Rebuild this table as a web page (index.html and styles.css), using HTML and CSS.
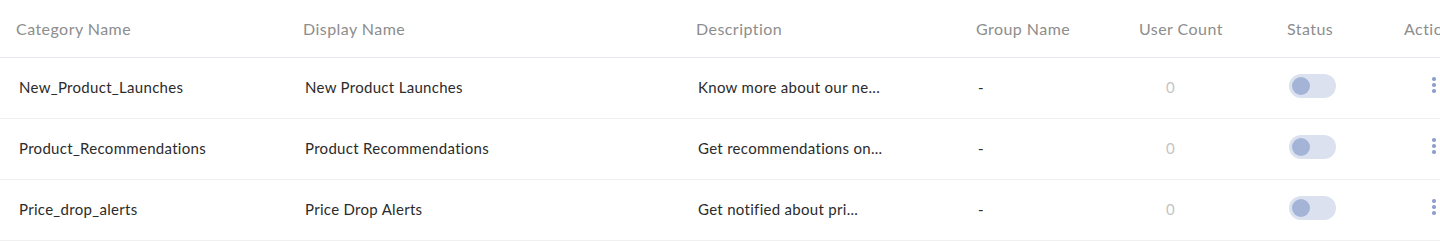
FILE: index.html
```html
<!DOCTYPE html>
<html>
<head>
<meta charset="utf-8">
<link rel="stylesheet" href="styles.css">
</head>
<body>
<div class="table">
  <div class="row head">
    <div class="cell">Category Name</div>
    <div class="cell">Display Name</div>
    <div class="cell">Description</div>
    <div class="cell">Group Name</div>
    <div class="cell">User Count</div>
    <div class="cell">Status</div>
    <div class="cell">Actions</div>
  </div>
  <div class="row">
    <div class="cell">New_Product_Launches</div>
    <div class="cell">New Product Launches</div>
    <div class="cell">Know more about our ne...</div>
    <div class="cell">-</div>
    <div class="cell count">0</div>
    <div class="cell"><span class="toggle"><span class="knob"></span></span></div>
    <div class="cell"><span class="kebab"><i></i><i></i><i></i></span></div>
  </div>
  <div class="row">
    <div class="cell">Product_Recommendations</div>
    <div class="cell">Product Recommendations</div>
    <div class="cell">Get recommendations on...</div>
    <div class="cell">-</div>
    <div class="cell count">0</div>
    <div class="cell"><span class="toggle"><span class="knob"></span></span></div>
    <div class="cell"><span class="kebab"><i></i><i></i><i></i></span></div>
  </div>
  <div class="row">
    <div class="cell">Price_drop_alerts</div>
    <div class="cell">Price Drop Alerts</div>
    <div class="cell">Get notified about pri...</div>
    <div class="cell">-</div>
    <div class="cell count">0</div>
    <div class="cell"><span class="toggle"><span class="knob"></span></span></div>
    <div class="cell"><span class="kebab"><i></i><i></i><i></i></span></div>
  </div>
</div>
</body>
</html>
```
FILE: styles.css
```css
html, body {
  margin: 0;
  padding: 0;
  background: #ffffff;
  overflow: hidden;
}
body {
  width: 1440px;
  font-family: Lato, "Open Sans", sans-serif;
}
.table {
  width: 1520px;
}
.row {
  display: grid;
  grid-template-columns: 287px 393px 280px 163px 148px 117px 1fr;
  height: 60px;
  align-items: center;
  border-bottom: 1px solid #f0f0f2;
  font-size: 15px;
  letter-spacing: 0.3px;
  color: #2b2b2b;
}
.row .cell {
  padding-left: 18px;
  padding-bottom: 2px;
  white-space: nowrap;
}
.row .cell:first-child {
  padding-left: 19px;
}
.row.head {
  height: 57px;
  border-bottom: 1px solid #e9e9ef;
  font-size: 16px;
  letter-spacing: 0.45px;
  color: #8d8d8d;
}
.row.head .cell {
  padding-left: 16px;
  padding-bottom: 0;
}
.row .cell.count {
  padding-left: 43px;
  color: #c4c4c4;
}
.toggle {
  display: flex;
  align-items: center;
  width: 47px;
  height: 24px;
  border-radius: 12px;
  background: #dbe1ef;
  box-sizing: border-box;
  padding-left: 3px;
  margin-top: -3px;
}
.knob {
  width: 18px;
  height: 18px;
  border-radius: 50%;
  background: #a4b4d7;
}
.kebab {
  display: flex;
  flex-direction: column;
  gap: 2.5px;
  margin-left: 26px;
  margin-top: -4px;
  width: 4px;
}
.kebab i {
  display: block;
  width: 3.5px;
  height: 3.5px;
  border-radius: 50%;
  background: #8fa0cf;
}
```
